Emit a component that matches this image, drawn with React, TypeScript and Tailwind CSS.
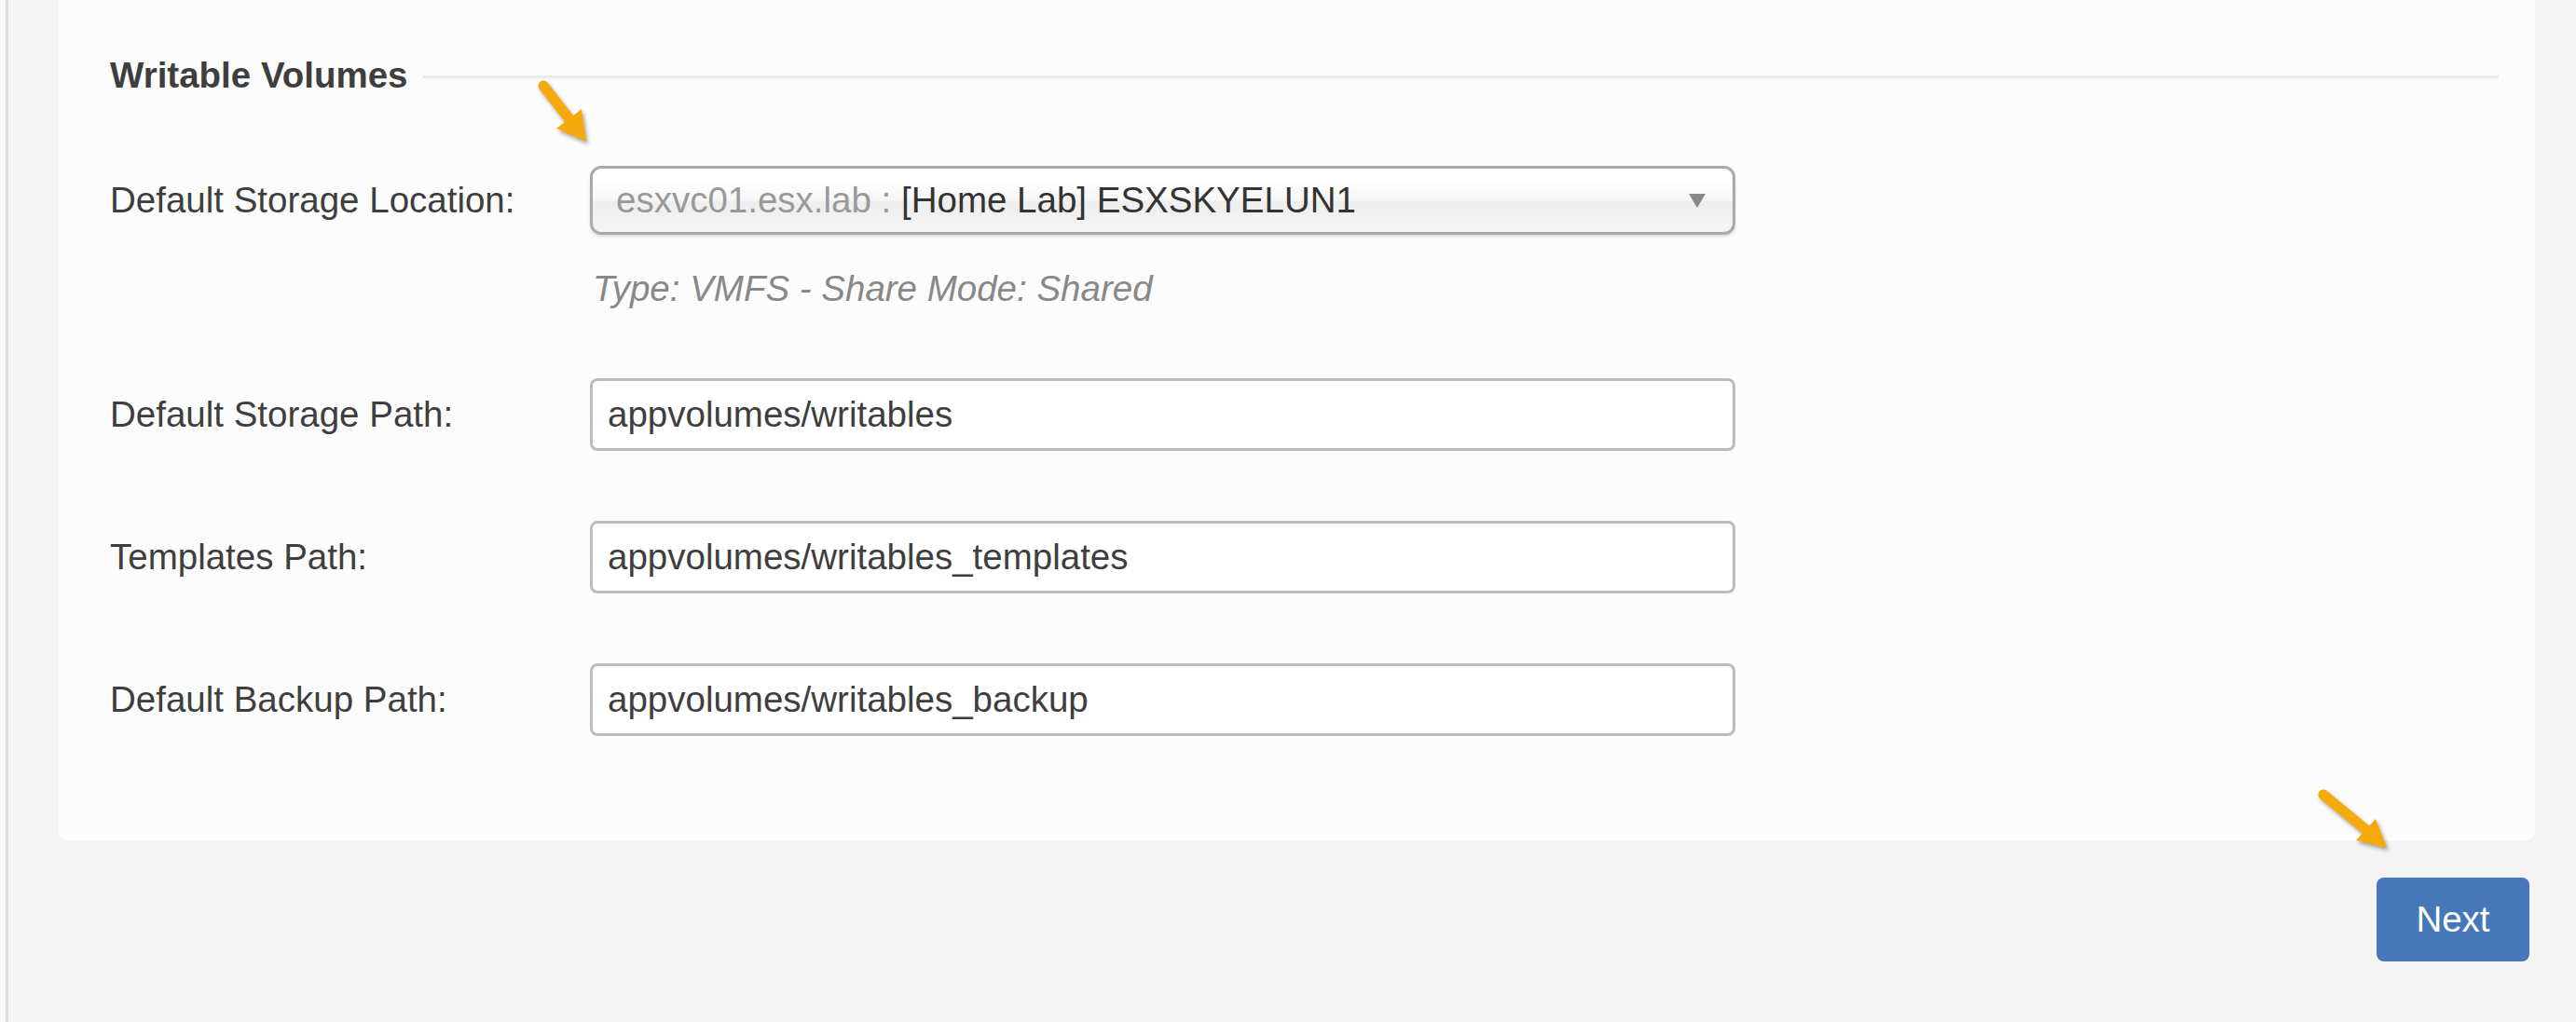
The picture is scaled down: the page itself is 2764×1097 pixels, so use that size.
import type { ReactNode } from 'react';

const FONT = "font-['Liberation_Sans',Arial,Helvetica,sans-serif]";

function Arrow({ className }: { className: string }) {
  // orange callout arrow pointing down-right
  return (
    <svg
      className={`pointer-events-none absolute drop-shadow-[2px_3px_2px_rgba(0,0,0,0.35)] ${className}`}
      width="80"
      height="80"
      viewBox="0 0 80 80"
    >
      <line
        x1="13"
        y1="12"
        x2="41"
        y2="48"
        stroke="#f6a90b"
        strokeWidth="11"
        strokeLinecap="round"
      />
      <polygon points="27,58 54,37 59,72" fill="#f6a90b" />
    </svg>
  );
}

function Arrow2({ className }: { className: string }) {
  return (
    <svg
      className={`pointer-events-none absolute drop-shadow-[2px_3px_2px_rgba(0,0,0,0.35)] ${className}`}
      width="95"
      height="80"
      viewBox="0 0 95 80"
    >
      <line
        x1="13"
        y1="13"
        x2="58"
        y2="50"
        stroke="#f6a90b"
        strokeWidth="11"
        strokeLinecap="round"
      />
      <polygon points="48,62 69,39 81,70" fill="#f6a90b" />
    </svg>
  );
}

function Row({ label, children }: { label: string; children: ReactNode }) {
  return (
    <div className="flex items-center">
      <label className="w-[515px] shrink-0 text-[#3e3e3e]">{label}</label>
      {children}
    </div>
  );
}

function TextField({ value }: { value: string }) {
  return (
    <input
      readOnly
      defaultValue={value}
      className={`h-[78px] w-[1229px] rounded-[8px] border-[3px] border-[#bcbcbc] bg-white pl-[16px] text-[38.5px] text-[#3e3e3e] outline-none ${FONT}`}
    />
  );
}

export default function App() {
  return (
    <div
      className={`relative flex min-h-[1097px] w-full bg-[#f4f4f4] text-[38.5px] ${FONT}`}
    >
      <div className="w-[6px] shrink-0 bg-[#fafafa]" />
      <div className="w-[3px] shrink-0 bg-[#dddddd]" />

      <main className="flex-1 pl-[54px] pr-[44px]">
        <section className="rounded-b-[10px] bg-[#fcfcfc] pb-[112px] pl-[55px] pr-[39px] pt-[59px]">
          <div className="flex h-[44px] items-center gap-[16px]">
            <h2 className="font-bold leading-[44px] text-[#3e3e3e]">
              Writable Volumes
            </h2>
            <div className="mt-[2px] h-[3px] flex-1 bg-[#ebebeb]" />
          </div>

          <div className="mt-[75px]">
            <Row label="Default Storage Location:">
              <div className="flex h-[74px] w-[1229px] items-center rounded-[12px] border-[3px] border-[#aaaaaa] bg-[linear-gradient(#fff_20%,#f6f6f6_50%,#eee_52%,#f4f4f4_100%)] pl-[25px] pr-[29px] shadow-[0_2px_3px_rgba(0,0,0,0.12)]">
                <span className="flex-1 whitespace-pre">
                  <span className="text-[#999]">esxvc01.esx.lab :</span>
                  <span className="text-[#333]"> [Home Lab] ESXSKYELUN1</span>
                </span>
                <svg width="18" height="15" viewBox="0 0 18 15">
                  <polygon points="0,0 18,0 9,15" fill="#888" />
                </svg>
              </div>
            </Row>
          </div>

          <p className="ml-[515px] mt-[36px] pl-[3px] leading-[43px] text-[#888] italic">
            Type: VMFS - Share Mode: Shared
          </p>

          <div className="mt-[75px] flex flex-col gap-[75px]">
            <Row label="Default Storage Path:">
              <TextField value="appvolumes/writables" />
            </Row>
            <Row label="Templates Path:">
              <TextField value="appvolumes/writables_templates" />
            </Row>
            <Row label="Default Backup Path:">
              <TextField value="appvolumes/writables_backup" />
            </Row>
          </div>
        </section>

        <div className="flex justify-end pr-[6px] pt-[40px]">
          <button className="h-[90px] w-[164px] rounded-[8px] bg-[#4677b8] text-white">
            Next
          </button>
        </div>
      </main>

      <Arrow className="left-[570px] top-[80px]" />
      <Arrow2 className="left-[2480px] top-[840px]" />
    </div>
  );
}
